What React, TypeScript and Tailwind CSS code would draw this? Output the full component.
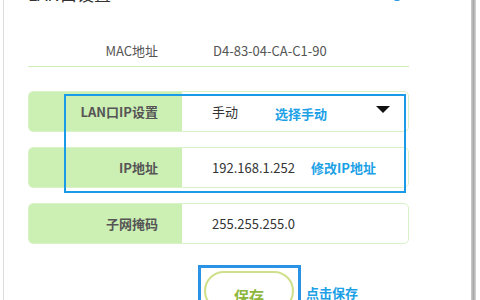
const font = { fontFamily: '"Noto Sans CJK SC", "Noto Sans", sans-serif' };

type Row = { label: string; value: string; note?: string; select?: boolean };

const rows: Row[] = [
  { label: "LAN口IP设置", value: "手动", note: "选择手动", select: true },
  { label: "IP地址", value: "192.168.1.252", note: "修改IP地址" },
  { label: "子网掩码", value: "255.255.255.0" },
];

function FieldRow({ row }: { row: Row }) {
  return (
    <div className="flex h-[41px] w-[381px] overflow-hidden rounded-[5px] border border-[#d9f2c8] bg-white">
      <div className="flex w-[153px] items-center justify-end bg-[#ccefb4] pr-[24px] text-[13px] font-bold text-[#555]">
        {row.label}
      </div>
      <div className="flex flex-1 items-center pl-[30px] pr-[18px] text-[13px] text-[#333]">
        <span>{row.value}</span>
        {row.note && (
          <span className={`${row.select ? "ml-[37px] mt-[4px]" : "ml-[16px]"} font-bold text-[#1ca0e6]`}>
            {row.note}
          </span>
        )}
        {row.select && (
          <svg className="ml-auto -mt-[4px]" width="14" height="7" viewBox="0 0 14 7">
            <path d="M0 0h14L7 7z" fill="#111" />
          </svg>
        )}
      </div>
    </div>
  );
}

export default function App() {
  return (
    <div className="h-[300px] w-[480px] overflow-hidden bg-white" style={font}>
      <div className="ml-[3px] flex h-full w-[474px]">
        <div className="relative h-full w-[468px] border-l border-[#dcdcdc]">
          {/* cut-off title */}
          <div className="-mt-[15px] flex h-[17px] items-center justify-between pl-[24px] pr-[68px]">
            <span className="text-[17px] text-[#333]">LAN口设置</span>
            <span className="mt-[2px] h-[12px] w-[12px] rounded-full bg-[#1a8fe0]" />
          </div>

          <div className="pl-[24px]">
            <div className="mt-[36px] flex h-[26px] w-[381px] items-center text-[13px] text-[#555]">
              <span className="w-[130px] text-right">MAC地址</span>
              <span className="ml-[55px]">D4-83-04-CA-C1-90</span>
            </div>
            <div className="mt-[2px] h-px w-[381px] bg-[#cdefb6]" />

            <div className="mt-[24px] flex flex-col gap-[15px]">
              {rows.map((r) => (
                <FieldRow key={r.label} row={r} />
              ))}
            </div>

            <div className="mt-[27px] flex items-start pl-[176px]">
              <div className="flex h-[40px] w-[90px] items-start justify-center rounded-full border-2 border-[#cfe08a] pt-[12px] text-[15px] font-bold text-[#8db63c]">
                保存
              </div>
              <span className="ml-[12px] mt-[12px] text-[13px] font-bold text-[#1ca0e6]">点击保存</span>
            </div>
          </div>

          {/* annotation boxes */}
          <div className="absolute left-[60px] top-[94px] h-[99px] w-[342px] border-2 border-[#1a9be8]" />
          <div className="absolute left-[194px] top-[265px] h-[50px] w-[103px] border-[3px] border-[#2a93e6]" />
        </div>
        <div className="h-full w-[5px] bg-gradient-to-r from-[#d0d0d0] via-[#a8a8a8] to-[#d8d8d8]" />
      </div>
    </div>
  );
}
